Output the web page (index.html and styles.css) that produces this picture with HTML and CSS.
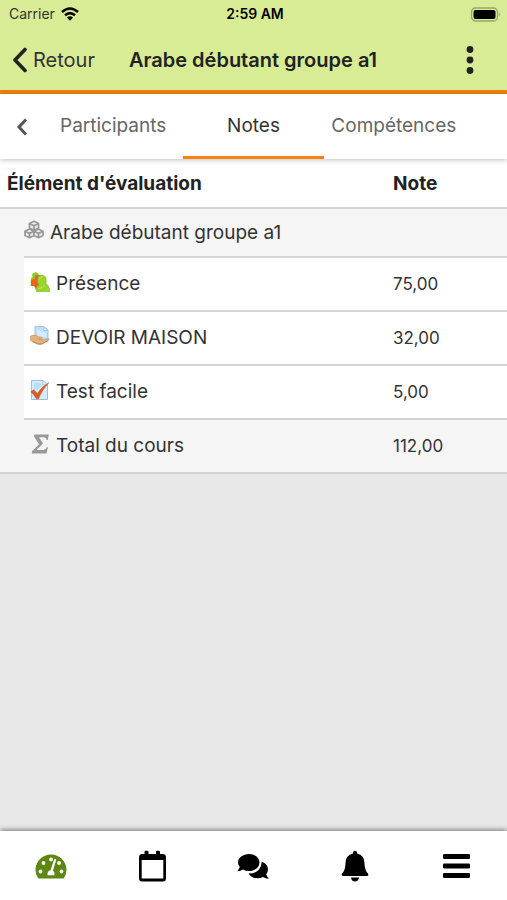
FILE: index.html
```
<!DOCTYPE html>
<html lang="fr">
<head>
    <meta charset="UTF-8">
    <meta name="viewport" content="width=device-width, initial-scale=1.0">
    <title>Arabe débutant groupe a1</title>
    <link rel="stylesheet" href="styles.css">
</head>
<body>
    <header class="header">
        <div class="status">
            <span class="carrier">Carrier
                <svg width="18" height="14" viewBox="0 0 18 14" fill="none" stroke="#000" stroke-width="2.5">
                    <path d="M1 5Q9 -2 17 5M4 8.300Q9 4 14 8.300"/>
                    <path d="M6 10.500Q9 8 12 10.500L9 13.800Z" fill="#000" stroke="none"/>
                </svg>
            </span>
            <span class="clock">2:59 AM</span>
            <svg class="battery" width="31" height="15" viewBox="0 0 31 15">
                <rect x="1.500" y="1" width="26" height="13" rx="4" fill="none" stroke="#96a56b" stroke-width="1.300"/>
                <rect x="3.500" y="3" width="22" height="9" rx="2"/>
                <path d="M29 5.500Q31 7.500 29 9.500Z" fill="#96a56b"/>
            </svg>
        </div>
        <div class="toolbar">
            <a class="back" href="#">
                <svg width="16" height="26" viewBox="0 0 16 26" fill="none" stroke="#222" stroke-width="3.600" stroke-linecap="round" stroke-linejoin="round">
                    <path d="M13 2.500L3 13L13 23.500"/>
                </svg>
                Retour
            </a>
            <h1>Arabe débutant groupe a1</h1>
            <button class="more" type="button" aria-label="Options">
                <svg width="8" height="28" viewBox="0 0 8 28" fill="#222">
                    <circle cx="4" cy="3.500" r="3.400"/>
                    <circle cx="4" cy="14" r="3.400"/>
                    <circle cx="4" cy="24.500" r="3.400"/>
                </svg>
            </button>
        </div>
    </header>

    <nav class="tabs">
        <button class="prev" type="button" aria-label="Onglets précédents">
            <svg width="12" height="18" viewBox="0 0 12 18" fill="none" stroke="#555" stroke-width="3">
                <path d="M10 1.500L3 9L10 16.500"/>
            </svg>
        </button>
        <a href="#">Participants</a>
        <a class="active" href="#">Notes</a>
        <a href="#">Compétences</a>
    </nav>

    <main>
        <table class="grades">
            <thead>
                <tr>
                    <th colspan="2">Élément d'évaluation</th>
                    <th class="grade">Note</th>
                </tr>
            </thead>
            <tbody>
                <tr class="category">
                    <td class="indent" rowspan="5"></td>
                    <td class="item" colspan="2">
                        <div class="name">
                            <!-- three cubes -->
                            <svg width="20" height="20" viewBox="0 0 20 20" fill="#eee" stroke="#999" stroke-width="1.800" stroke-linejoin="round">
                                <path d="M5.500 3.500L10 1.300L14.500 3.500V8L10 10.200L5.500 8ZL10 5.700L14.500 3.500M10 5.700V10.200"/>
                                <path d="M1 11.300L5.500 9L10 11.300V15.500L5.500 17.700L1 15.500ZL5.500 13.400L10 11.300M5.500 13.400V17.700"/>
                                <path d="M10 11.300L14.500 9L19 11.300V15.500L14.500 17.700L10 15.500ZL14.500 13.400L19 11.300M14.500 13.400V17.700"/>
                            </svg>
                            Arabe débutant groupe a1
                        </div>
                    </td>
                </tr>
                <tr>
                    <td class="item">
                        <div class="name">
                            <!-- group of people -->
                            <svg width="20" height="20" viewBox="0 0 20 20">
                                <path d="M.7 14V7.500Q.8 5.800 2.500 5Q1 1 5 .4Q8.500 0 8.800 4L9 10Z" fill="#8acb24"/>
                                <path d="M1 14V9Q1.500 7.500 5 6.500Q4.500 3.500 7.500 2.800Q11.500 2.500 11.500 7L10 14L6 17.500L4 14Z" fill="#e86620"/>
                                <path d="M6.500 19.500Q5 15 9 13.300Q6.700 10 7.500 6.500Q8.200 3 12 3.200Q16 3.500 16.200 8L15.900 12Q18.500 12.500 19.500 17.500L19.600 19.500Z" fill="#99d52a" stroke="#75b51b" stroke-width=".6"/>
                                <path d="M9.500 7.500Q10 5.300 12.500 5.200M8.500 16.500Q12.500 16.500 14.500 13" fill="none" stroke="#bbed5b"/>
                            </svg>
                            Présence
                        </div>
                    </td>
                    <td class="grade">75,00</td>
                </tr>
                <tr>
                    <td class="item">
                        <div class="name">
                            <!-- hand holding a sheet -->
                            <svg width="20" height="20" viewBox="0 0 20 20">
                                <path d="M5 .5H14L18 4.500V15.500H5Z" fill="#c0def8" stroke="#8fb9e6" stroke-width=".8"/>
                                <path d="M14 .5V4.500H18Z" fill="#eef8ff" stroke="#8fb9e6" stroke-width=".7"/>
                                <path d="M7 3.500V11H16V7Z" fill="#d6ebfc"/>
                                <path d="M.4 10.300Q3.500 8.300 6.300 9.600Q8.500 11.300 12.200 11.200Q13 13 8.800 13L14 13.700L18.400 12.300Q20 12.500 18.500 14L12.500 17.700Q9.500 19 6 17.200L.4 14.500Z" fill="#e5b17b" stroke="#bc824f" stroke-width=".5"/>
                                <path d="M3 15.600Q8 19.500 12 18L17 15.200" fill="none" stroke="#b47b4a" stroke-width=".8"/>
                            </svg>
                            DEVOIR MAISON
                        </div>
                    </td>
                    <td class="grade">32,00</td>
                </tr>
                <tr>
                    <td class="item">
                        <div class="name">
                            <!-- sheet with a tick -->
                            <svg width="20" height="20" viewBox="0 0 20 20">
                                <path d="M1.500 .5H13L17.500 5V19.500H1.500Z" fill="#d5eafb" stroke="#8fb9e6" stroke-width=".9"/>
                                <path d="M13 .5V5H17.500Z" fill="#f0f8ff" stroke="#8fb9e6" stroke-width=".8"/>
                                <path d="M4 3H11V7L4 11Z" fill="#bcddf7"/>
                                <path d="M.8 11.800L3.900 9.800L7.300 13.400Q12 6.500 19 2.500Q12.200 9.500 8.500 18.800H6.300Q4.200 14.700 .8 11.800Z" fill="#df5a20" stroke="#b8441d" stroke-width=".4"/>
                            </svg>
                            Test facile
                        </div>
                    </td>
                    <td class="grade">5,00</td>
                </tr>
                <tr class="total">
                    <td class="item">
                        <div class="name">
                            <!-- sigma -->
                            <svg width="20" height="20" viewBox="0 0 20 20" fill="#999">
                                <path d="M4.500 .5H18.800L17.800 6H16.500Q16.500 3.200 13.500 3.200H9L13 9.500L6.500 16H12.300Q15.500 16 16.800 13.200H18L16.500 19.500H1.800L2.200 17L9 10.300L4 2.500Z"/>
                            </svg>
                            Total du cours
                        </div>
                    </td>
                    <td class="grade">112,00</td>
                </tr>
            </tbody>
        </table>
    </main>

    <footer class="bottom-nav">
        <a class="current" href="#" aria-label="Tableau de bord">
            <svg width="32" height="32" viewBox="0 0 32 32">
                <path d="M3 28Q.5 24.500 .5 20A15.500 15.500 0 0 1 31.500 20Q31.500 24.500 29 28Q28.500 28.500 27.500 28.500H4.500Q3.500 28.500 3 28Z" fill="#5d8710"/>
                <g fill="#fff">
                    <circle cx="5.500" cy="21.500" r="1.900"/>
                    <circle cx="8.500" cy="13" r="1.900"/>
                    <circle cx="16" cy="9.500" r="1.900"/>
                    <circle cx="24" cy="13" r="1.900"/>
                    <circle cx="26.500" cy="21.500" r="1.900"/>
                    <path d="M19.200 9.200Q20 8.300 21.300 9.500L18 20.500Q20 22 19.500 25.200H12.500Q12 21 15.500 20.200Z"/>
                </g>
            </svg>
        </a>
        <a href="#" aria-label="Calendrier">
            <svg width="32" height="32" viewBox="0 0 32 32">
                <path d="M8.500 4V2Q8.500 .8 9.700 .8H11.300Q12.500 .8 12.500 2V4H20V2Q20 .8 21.200 .8H22.800Q24 .8 24 2V4H27Q30 4 30 7.500V28Q30 31.500 27 31.500H6Q3 31.500 3 28V7.500Q3 4 6 4ZM5.700 10V28Q5.700 28.500 6.200 28.500H26.800Q27.300 28.500 27.300 28V10Z" fill-rule="evenodd"/>
            </svg>
        </a>
        <a href="#" aria-label="Messages">
            <svg width="32" height="32" viewBox="0 0 32 32">
                <path d="M12 4C18 4 22.500 7.600 22.500 12.500S18 21 12 21Q8.500 21 6 19.500Q3.500 21.300 .8 21.300Q.3 21 .7 20.500Q2.500 18.500 2.800 16.800Q1 15 1 12.500C1 7.600 6 4 12 4Z"/>
                <path d="M24.500 11.500Q31 14 31 19.500Q31 22.300 29.200 24.200Q29.500 26 31.400 28Q31.700 28.500 31.200 28.700Q28.500 28.600 26 27Q23.500 28.300 20.500 28.300Q14.500 28.300 11.500 23.500Q18.500 23.500 22 19.500Q25 16 24.500 11.500Z"/>
            </svg>
        </a>
        <a href="#" aria-label="Notifications">
            <svg width="32" height="32" viewBox="0 0 32 32">
                <path d="M14 3.500V2.500Q14 .8 16 .8T18 2.500V3.500Q25.500 5 25.500 13Q25.500 20.500 29 23.500Q30 26 28 26H4Q2 26 3 23.500Q6.500 20.500 6.500 13Q6.500 5 14 3.500ZM12 27.500H20Q19.500 31.500 16 31.500T12 27.500Z"/>
            </svg>
        </a>
        <a href="#" aria-label="Menu">
            <svg width="32" height="32" viewBox="0 0 32 32">
                <rect x="3" y="4" width="27" height="5" rx="1.200"/>
                <rect x="3" y="13.500" width="27" height="5" rx="1.200"/>
                <rect x="3" y="23" width="27" height="5" rx="1.200"/>
            </svg>
        </a>
    </footer>
</body>
</html>
```
FILE: styles.css
```
* {
    box-sizing: border-box;
}

body {
    margin: 0;
    min-height: 100vh;
    display: flex;
    flex-direction: column;
    font-family: Inter, "Liberation Sans", sans-serif;
    font-size: 19px;
    line-height: 24px;
    color: #333;
    background-color: #e8e8e8;
}

a {
    color: inherit;
    text-decoration: none;
}

button {
    padding: 0;
    border: none;
    background: none;
    cursor: pointer;
}

svg {
    display: block;
    flex-shrink: 0;
}

/* Header */
.header {
    background-color: #d8ec95;
    border-bottom: 4px solid #f08010;
}

.status {
    display: grid;
    grid-template-columns: 1fr auto 1fr;
    align-items: center;
    height: 28px;
    padding: 0 6px 0 9px;
    font-size: 14px;
    color: #000;
}

.carrier {
    display: flex;
    align-items: center;
    gap: 6px;
    color: #333;
}

.clock {
    font-weight: 600;
}

.battery {
    justify-self: end;
}

.toolbar {
    display: grid;
    grid-template-columns: 1fr auto 1fr;
    align-items: center;
    height: 62px;
    padding: 2px 33px 0 12px;
    font-size: 20px;
}

.back {
    display: flex;
    align-items: center;
    gap: 5px;
}

.toolbar h1 {
    margin: 0 0 0 20px;
    font-size: 20px;
    font-weight: 600;
    color: #222;
}

.more {
    justify-self: end;
}

/* Tabs */
.tabs {
    position: relative; /* keeps the shadow over the table */
    display: grid;
    grid-template-columns: 43px 1fr 1fr 1fr;
    height: 65px;
    padding-right: 43px;
    background-color: #fff;
    box-shadow: 0 1px 5px rgba(0, 0, 0, 0.25);
    color: #666;
}

.prev {
    display: flex;
    align-items: center;
    justify-content: center;
}

.tabs a {
    display: flex;
    align-items: center;
    justify-content: center;
    padding-top: 2px;
    border-bottom: 3px solid transparent;
}

.tabs .active {
    color: #333;
    border-bottom-color: #f98012;
}

/* Grades */
main {
    flex: 1;
}

.grades {
    width: 100%;
    border-collapse: separate;
    border-spacing: 0;
    background-color: #fff;
    border-bottom: 2px solid #d4d4d4;
}

.grades th {
    height: 50px;
    padding: 2px 0 0 7px;
    border-bottom: 2px solid #d4d4d4;
    text-align: left;
    font-weight: 700;
    color: #222;
}

.grades td {
    height: 54px;
    padding: 0;
    border-bottom: 2px solid #d4d4d4;
}

.grades .category td {
    height: 49px;
}

.grades td.item {
    padding-left: 6px;
}

.grades .category .item {
    padding-left: 0;
}

.grades td.indent,
.grades .total td {
    border-bottom: none;
}

.grades .total td {
    height: 52px;
}

.category td,
.total td,
.indent {
    background-color: #f5f5f5;
}

.indent {
    width: 24px;
}

.grades .grade {
    width: 114px;
    padding-left: 0;
}

.grades td.grade {
    font-size: 17px;
}

.name {
    display: flex;
    align-items: center;
    gap: 6px;
}

.name svg {
    margin-bottom: 5px;
}

/* Bottom navigation */
.bottom-nav {
    display: grid;
    grid-template-columns: repeat(5, 1fr);
    height: 69px;
    background-color: #fff;
    box-shadow: 0 -1px 5px rgba(0, 0, 0, 0.5);
}

.bottom-nav a {
    display: flex;
    align-items: center;
    justify-content: center;
}
```
